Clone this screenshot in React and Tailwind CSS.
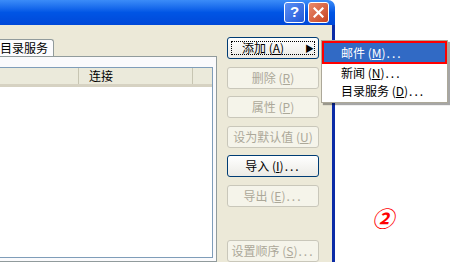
import React from "react"

const font = { fontFamily: '"Noto Sans CJK SC", "Liberation Sans", sans-serif' }

function Key({ k }) {
    return <span>(<span className="underline">{k}</span>)</span>
}

function Dots() {
    return <span className="tracking-[2px] ml-[1px]">...</span>
}

function XpButton({ label, k, dots, disabled, focus, arrow }) {
    const base = "relative h-[22px] w-[92px] rounded-[3px] border text-[12px] leading-none flex items-center justify-center"
    const look = disabled
        ? "border-[#C9C7BA] bg-[#F5F4EA] text-[#ACA899]"
        : "border-[#003C74] bg-gradient-to-b from-[#FFFFFF] to-[#ECEBE6] text-black"
    return <div className={base + " " + look}>
        {focus && <div className="absolute inset-[3px] border border-dotted border-black" />}
        <span className={arrow ? "mr-[20px]" : ""}>{label} <Key k={k} />{dots && <Dots />}</span>
        {arrow && <span className="absolute right-[4px] text-[9px]">▶</span>}
    </div>
}

function MenuItem({ label, k, active }) {
    if (active) {
        return <div className="h-[23px] border-2 border-[#FF0000] bg-[#316AC5] text-white flex items-center pl-[17px]">
            {label}&nbsp;<Key k={k} /><Dots />
        </div>
    }
    return <div className="h-[18px] flex items-center pl-[19px] text-black">
        {label}&nbsp;<Key k={k} /><Dots />
    </div>
}

export default function App() {
    return <div className="relative w-[450px] h-[262px] bg-white overflow-hidden text-[12px]" style={font}>
        <div className="w-[335px] h-full flex flex-col">
            {/* title bar */}
            <div className="h-[28px] rounded-tr-[7px] bg-gradient-to-b from-[#3B8CF8] via-[#0055E5] to-[#0048D8] flex items-center justify-end pr-[6px] gap-[3px]">
                <div className="w-[21px] h-[21px] rounded-[3px] border border-white bg-gradient-to-br from-[#5A8FF5] to-[#2457D6] flex items-center justify-center text-white font-bold text-[15px]" style={{ fontFamily: '"Liberation Sans", sans-serif' }}>?</div>
                <div className="w-[21px] h-[21px] rounded-[3px] border border-white bg-gradient-to-br from-[#E98A6C] to-[#C6401C] flex items-center justify-center">
                    <svg width="11" height="11" viewBox="0 0 11 11"><path d="M1.5 1.5 L9.5 9.5 M9.5 1.5 L1.5 9.5" stroke="white" strokeWidth="2.2" strokeLinecap="square" /></svg>
                </div>
            </div>
            {/* body */}
            <div className="flex-1 flex bg-[#ECE9D8] border-r-[3px] border-[#0B2BA6]">
                <div className="w-[217px] flex flex-col">
                    <div className="h-[31px] flex items-end">
                        <div className="h-[17px] ml-[-3px] pl-[2px] pr-[5px] bg-[#FCFCFE] border border-b-0 border-[#919B9C] rounded-tr-[3px] flex items-center text-black">目录服务</div>
                    </div>
                    <div className="flex-1 bg-[#FAFAFC] border-t border-r border-b border-[#919B9C] pt-[10px] pr-[3px] pb-[3px] flex">
                        <div className="flex-1 border border-l-0 border-[#7F9DB9] bg-white flex flex-col">
                            <div className="h-[19px] bg-[#EBEADB] border-b-[3px] border-[#D6D2C2] flex">
                                <div className="w-[79px] border-r border-[#C7C5B2]" />
                                <div className="w-[114px] border-r border-[#C7C5B2] pl-[10px] flex items-center text-black">连接</div>
                            </div>
                        </div>
                    </div>
                </div>
                <div className="ml-[10px] pt-[12px] flex flex-col gap-[7.5px]">
                    <XpButton label="添加" k="A" focus arrow />
                    <XpButton label="删除" k="R" disabled />
                    <XpButton label="属性" k="P" disabled />
                    <XpButton label="设为默认值" k="U" disabled />
                    <XpButton label="导入" k="I" dots />
                    <XpButton label="导出" k="E" dots disabled />
                    <div className="mt-[26px]">
                        <XpButton label="设置顺序" k="S" dots disabled />
                    </div>
                </div>
            </div>
        </div>

        {/* popup menu */}
        <div className="absolute left-[321px] top-[40px] w-[127px] bg-white border border-[#ACA899] shadow-[2px_2px_1px_rgba(0,0,0,0.35)] flex flex-col pb-[2px]">
            <MenuItem label="邮件" k="M" active />
            <MenuItem label="新闻" k="N" />
            <MenuItem label="目录服务" k="D" />
        </div>

        {/* annotation */}
        <div className="absolute left-[372px] top-[201px] text-[22px] font-bold italic text-[#FF0000]">②</div>
    </div>
}
